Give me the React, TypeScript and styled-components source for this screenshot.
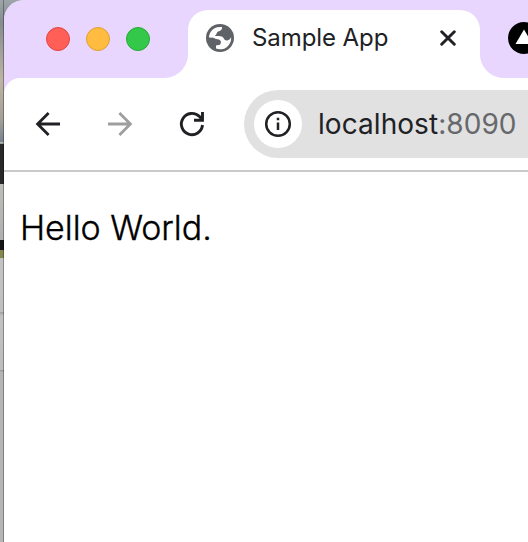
import React from "react";
import styled, { createGlobalStyle } from "styled-components";

const GlobalStyle = createGlobalStyle`
  *, *::before, *::after { box-sizing: border-box; }
  html, body { margin: 0; background: #fff; }
  body { overflow: hidden; }
  svg { display: block; flex: none; }
`;

const Desktop = styled.div`
  display: flex;
  width: 528px;
  height: 542px;
  overflow: hidden;
  background: linear-gradient(#9da5a8 0, #858b8f 22px, #a09f9b 50px, #bcb4a6 80px, #a6a198 118px, #78838f 142px, #c0c0c0 142px, #909090 144px, #29292b 144px, #29292b 184px, #bdbdba 184px, #b0b0ae 240px, #151518 240px, #151518 250px, #858650 250px, #858650 258px, #c4c4c3 258px, #bfbfbf 312px, #a0a0a0 312px, #c2c2c2 316px, #bdbdbd 370px, #929292 370px, #b5b5b5 372px, #b5b5b5 100%);
`;

const Backdrop = styled.div`
  flex: none;
  width: 4px;
  box-shadow: inset -1px 0 0 rgba(0, 0, 0, 0.3);
`;

const Window = styled.main`
  flex: 1;
  min-width: 0;
  overflow: hidden;
  border-top-left-radius: 20px;
  background: linear-gradient(#e8d6ff 0, #e8d6ff 110px, #fff 110px);
`;

const TabStrip = styled.header`
  display: flex;
  height: 78px;
  padding-top: 10px;
  background: #e8d6ff;
`;

const WindowControls = styled.div`
  display: flex;
  flex: none;
  gap: 16px;
  width: 184px;
  padding: 17px 0 0 42px;
`;

const Control = styled.span<{ $fill: string; $edge: string }>`
  width: 24px;
  height: 24px;
  border-radius: 50%;
  background: ${(p) => p.$fill};
  border: 1px solid ${(p) => p.$edge};
`;

const Tab = styled.div`
  position: relative;
  display: flex;
  align-items: center;
  flex: none;
  width: 292px;
  padding: 0 0 12px 18px;
  border-radius: 20px 20px 0 0;
  background: #fff;
  &::before, &::after {
    content: "";
    position: absolute;
    bottom: 0;
    width: 24px;
    height: 24px;
  }
  &::before {
    right: 100%;
    background: radial-gradient(circle at 0 0, transparent 23.5px, #fff 24.5px);
  }
  &::after {
    left: 100%;
    background: radial-gradient(circle at 100% 0, transparent 23.5px, #fff 24.5px);
  }
`;

const TabTitle = styled.span`
  width: 188px;
  margin-left: 18px;
  font: 400 24px/28px Inter, sans-serif;
  letter-spacing: -0.08px;
  color: #202124;
  white-space: nowrap;
`;

const NextTab = styled.div`
  flex: none;
  padding: 12px 0 0 28px;
`;

const Toolbar = styled.nav`
  display: flex;
  align-items: center;
  height: 94px;
  padding-left: 28px;
  border-bottom: 2px solid #cacaca;
  border-top-left-radius: 16px;
  background: #fff;
`;

const NavButtons = styled.div`
  display: flex;
  flex: none;
  gap: 40px;
  width: 212px;
`;

const AddressBar = styled.div`
  display: flex;
  align-items: center;
  flex: none;
  width: 360px;
  height: 68px;
  padding-left: 10px;
  border-radius: 34px;
  background: #e1e1e1;
`;

const SiteInfo = styled.span`
  display: grid;
  place-items: center;
  width: 48px;
  height: 48px;
  border-radius: 50%;
  background: #fff;
`;

const Url = styled.span`
  margin-left: 16px;
  font: 400 28px/34px Inter, sans-serif;
  letter-spacing: 0.06px;
  color: #202124;
`;

const Port = styled.span`
  color: #66686b;
`;

const Page = styled.section`
  height: 370px;
  padding: 32px 16px;
  background: #fff;
`;

const Greeting = styled.p`
  margin: 0;
  font: 300 34px/48px Inter, sans-serif;
  letter-spacing: -0.05px;
  -webkit-text-stroke: 0.35px #000;
  color: #000;
`;

const Globe = () => (
  <svg width="28" height="28" viewBox="0 0 28 28">
    <circle cx="14" cy="14" r="14" fill="#5f6368" />
    <path
      fill="#fff"
      d="M2.9 13.6A11.1 11.1 0 0 1 16 3.1V4.3Q15.8 6.4 13.6 7.1Q11 7.6 10.8 8.9Q10.3 11 8.7 12H12.5Q17.2 12 18.4 15.4Q20 17 22 16.2Q24 15.7 25.1 13.3A11.1 11.1 0 0 1 10 24.6V21.6Q11.4 20.8 13.4 20.9Q15 20.4 14.9 18Q14.4 15.3 11.5 15.2Q9 15.2 7.6 13.8Z"
    />
  </svg>
);

const Close = () => (
  <svg width="16" height="16" viewBox="0 0 16 16" stroke="#202124" strokeWidth="2.9" strokeLinecap="round">
    <path d="M1.7 1.7L14.3 14.3M14.3 1.7L1.7 14.3" />
  </svg>
);

const Arrow = ({ forward = false }: { forward?: boolean }) => (
  <svg width="32" height="32" viewBox="0 0 32 32" fill="none" stroke={forward ? "#9e9e9e" : "#202124"} strokeWidth="2.8">
    <path d={forward ? "M4 16H26M15.4 5L26.4 16L15.4 27" : "M28 16H6M16.6 5L5.6 16L16.6 27"} />
  </svg>
);

const Reload = () => (
  <svg width="32" height="32" viewBox="0 0 32 32" fill="none" stroke="#202124" strokeWidth="2.9">
    <path d="M26.5 17A10.6 10.6 0 1 1 23.5 8.6L26 11.2M26.5 4V12.2H18" />
  </svg>
);

const Info = () => (
  <svg width="28" height="28" viewBox="0 0 28 28">
    <circle cx="14" cy="14" r="11.8" fill="none" stroke="#202124" strokeWidth="2.5" />
    <path d="M14 12.4V20M14 7.8V10.3" stroke="#202124" strokeWidth="2.5" />
  </svg>
);

const TriangleBadge = () => (
  <svg width="32" height="32" viewBox="0 0 32 32">
    <circle cx="16" cy="16" r="16" fill="#000" />
    <path d="M16 7.5L24.5 22H7.5Z" fill="#fff" />
  </svg>
);

export default function App() {
  return (
    <>
      <GlobalStyle />
      <Desktop>
        <Backdrop />
        <Window>
          <TabStrip>
            <WindowControls>
              <Control $fill="#ff5f57" $edge="#e2463f" />
              <Control $fill="#ffbc40" $edge="#dfa033" />
              <Control $fill="#34c84a" $edge="#27aa35" />
            </WindowControls>
            <Tab>
              <Globe />
              <TabTitle>Sample App</TabTitle>
              <Close />
            </Tab>
            <NextTab>
              <TriangleBadge />
            </NextTab>
          </TabStrip>
          <Toolbar>
            <NavButtons>
              <Arrow />
              <Arrow forward />
              <Reload />
            </NavButtons>
            <AddressBar>
              <SiteInfo>
                <Info />
              </SiteInfo>
              <Url>
                localhost<Port>:8090</Port>
              </Url>
            </AddressBar>
          </Toolbar>
          <Page>
            <Greeting>Hello World.</Greeting>
          </Page>
        </Window>
      </Desktop>
    </>
  );
}
